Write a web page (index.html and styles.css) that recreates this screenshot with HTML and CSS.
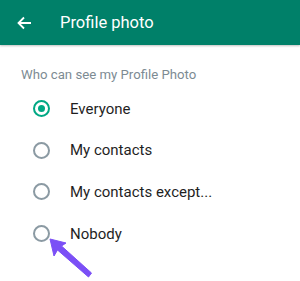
FILE: index.html
```html
<!DOCTYPE html>
<html>
<head>
<meta charset="utf-8">
<link rel="stylesheet" href="styles.css">
</head>
<body>
<header class="bar">
  <svg class="back" width="16" height="16" viewBox="0 0 16 16"><path d="M15 8H2.5M8 2.5L2.5 8 8 13.5" fill="none" stroke="#fff" stroke-width="1.8"/></svg>
  <span class="title">Profile photo</span>
</header>
<main class="content">
  <div class="caption">Who can see my Profile Photo</div>
  <ul class="options">
    <li class="opt"><span class="radio on"></span><span class="label">Everyone</span></li>
    <li class="opt"><span class="radio"></span><span class="label">My contacts</span></li>
    <li class="opt"><span class="radio"></span><span class="label">My contacts except...</span></li>
    <li class="opt"><span class="radio"></span><span class="label">Nobody</span>
      <svg class="pointer" width="50" height="45" viewBox="0 0 50 45"><polygon points="4,3 20,7 15.5,10 45.5,37 42.5,41 11.5,14 8,20" fill="#7b4ff6" stroke="#7b4ff6" stroke-width="1" stroke-linejoin="round"/></svg>
    </li>
  </ul>
</main>
</body>
</html>
```
FILE: styles.css
```css
html, body { margin: 0; padding: 0; background: #fff; }
body { width: 300px; height: 281px; overflow: hidden; font-family: Roboto, "Noto Sans", sans-serif; }
.bar {
  height: 45px; background: #008069; display: flex; align-items: center;
  box-shadow: 0 1px 2px rgba(0,0,0,0.25); position: relative;
}
.back { margin-left: 16px; }
.title { color: #fff; font-size: 16.5px; margin-left: 28px; }
.content { padding: 22px 0 0 21px; }
.caption { color: #7d8b93; font-size: 13.2px; line-height: 16px; }
.options { list-style: none; margin: 5px 0 0 0; padding: 0; }
.opt { height: 41.6px; display: flex; align-items: center; position: relative; }
.radio {
  width: 13px; height: 13px; border: 2px solid #8b9aa3; border-radius: 50%;
  margin-left: 12px; box-sizing: content-box; position: relative;
}
.radio.on { border-color: #00a884; }
.radio.on::after {
  content: ""; position: absolute; left: 3px; top: 3px; width: 7px; height: 7px;
  border-radius: 50%; background: #00a884;
}
.label { margin-left: 20px; font-size: 15px; color: #1f1f1f; }
.pointer { position: absolute; left: 25px; top: 23px; }
```
